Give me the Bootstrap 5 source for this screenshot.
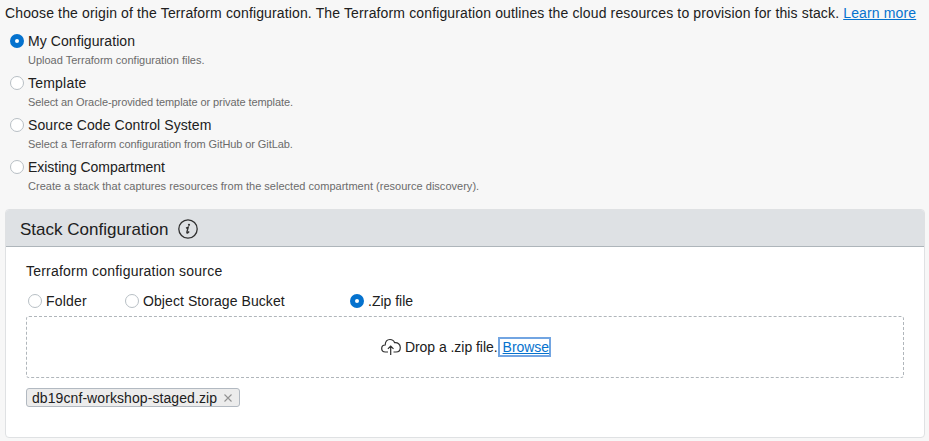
<!DOCTYPE html>
<html lang="en">
<head>
<meta charset="utf-8">
<title>Stack Configuration</title>
<link href="https://cdn.jsdelivr.net/npm/bootstrap@5.3.0/dist/css/bootstrap.min.css" rel="stylesheet">
<style>
body{background:#f7f7f7;color:#202020;font:14px/20px "Liberation Sans",Arial,sans-serif;height:441px;overflow:hidden;padding:3px 4px 0 5px}
a{color:#0572ce}
.intro{height:28px;white-space:nowrap;letter-spacing:.138px}
.source-option{height:42px;padding-left:5px}
.form-check-input.dot-radio{width:14px;height:14px;margin:0;border:1px solid #b8bfc5;background-color:#fff;flex:none;box-shadow:none}
.form-check-input.dot-radio:checked{border:5px solid #0572ce;background:#fff}
.radio-label{gap:4px}
.ls-snug{letter-spacing:-.04px}
.ls-soft{letter-spacing:.08px}
.ls-wide{letter-spacing:.22px}
.hint{font-size:11px;line-height:18px;color:#6b6b6b;padding-left:18px}
.hint-snug{letter-spacing:-.085px}
.hint-soft{letter-spacing:.02px}
.stack-panel{height:229px;border:1px solid #dfe1e3;border-radius:4px;background:#fff;color:inherit;margin-top:10px}
.stack-head{height:37px;background:#dee1e4;border-bottom:1px solid #aeb5ba;padding:3px 14px 0;gap:9px;border-radius:3px 3px 0 0}
.stack-head svg{margin-top:-2px}
.stack-title{font-size:17px;line-height:20px;font-weight:400}
.stack-body{padding:14px 20px 0}
.kinds{padding:10px 0 0 2px}
.kind-folder{width:97px}
.kind-bucket{width:225px}
.drop-zone{height:62px;margin-top:5px;border:1px dashed #b0b6bb;border-radius:3px;padding-left:2px}
.drop-text{letter-spacing:-.04px}
.browse-link{border:2px solid #72a5e2;line-height:16px;padding:0 0 0 3px;letter-spacing:-.03px}
.file-chip{height:19px;margin-top:10px;border:1px solid #b2b9c1;border-radius:3px;background:#ececec;padding:0 7px 0 5px;gap:7px}
</style>
<script src="https://cdn.jsdelivr.net/npm/bootstrap@5.3.0/dist/js/bootstrap.bundle.min.js"></script>
</head>
<body>
<div class="intro">Choose the origin of the Terraform configuration. The Terraform configuration outlines the cloud resources to provision for this stack. <a href="#">Learn more</a></div>
<div class="source-option"><label class="radio-label ls-soft d-flex align-items-center"><input class="form-check-input dot-radio" type="radio" name="origin" checked>My Configuration</label><div class="hint">Upload Terraform configuration files.</div></div>
<div class="source-option"><label class="radio-label ls-wide d-flex align-items-center"><input class="form-check-input dot-radio" type="radio" name="origin">Template</label><div class="hint hint-snug">Select an Oracle-provided template or private template.</div></div>
<div class="source-option"><label class="radio-label ls-soft d-flex align-items-center"><input class="form-check-input dot-radio" type="radio" name="origin">Source Code Control System</label><div class="hint hint-snug">Select a Terraform configuration from GitHub or GitLab.</div></div>
<div class="source-option"><label class="radio-label ls-snug d-flex align-items-center"><input class="form-check-input dot-radio" type="radio" name="origin">Existing Compartment</label><div class="hint hint-soft">Create a stack that captures resources from the selected compartment (resource discovery).</div></div>
<section class="card stack-panel">
  <div class="stack-head d-flex align-items-center">
    <h2 class="stack-title mb-0">Stack Configuration</h2>
    <svg width="22" height="22" viewBox="0 0 22 22" fill="none" stroke="#303030" aria-label="Information"><circle cx="11" cy="11" r="9.2" stroke-width="1.3"/><circle cx="12" cy="6.800" r="1.100" fill="#303030" stroke="none"/><path d="M9 10.200l2.200-.9-1.300 4.800q-.2 1.200.8.700l1.500-1.300" stroke-width="1.4"/></svg>
  </div>
  <div class="stack-body">
    <div class="ls-wide">Terraform configuration source</div>
    <div class="kinds d-flex">
      <label class="radio-label kind-folder ls-wide d-flex align-items-center"><input class="form-check-input dot-radio" type="radio" name="kind">Folder</label>
      <label class="radio-label kind-bucket ls-soft d-flex align-items-center"><input class="form-check-input dot-radio" type="radio" name="kind">Object Storage Bucket</label>
      <label class="radio-label d-flex align-items-center"><input class="form-check-input dot-radio" type="radio" name="kind" checked>.Zip file</label>
    </div>
    <div class="drop-zone d-flex align-items-center justify-content-center">
      <svg class="me-1" width="20" height="18" viewBox="0 0 20 18" fill="none" stroke="#303030" stroke-width="1.2"><path d="M7 14H4.300C2.200 14 .7 12.600.7 10.500.7 8.500 2.200 7 4.200 7 4.300 3.800 6.200 1.500 9 1.500c2.300 0 3.900 1.200 4.600 3.200 3.200-.4 5.700 1.500 5.700 4.700C19.300 12.200 17.500 14 15 14h-2.500M9.700 17V8M6.900 10.800 9.700 8l2.800 2.800"/></svg>
      <span class="drop-text">Drop a .zip file.</span><a class="browse-link" href="#">Browse</a>
    </div>
    <div class="file-chip d-inline-flex align-items-center"><span class="ls-soft">db19cnf-workshop-staged.zip</span><svg width="8" height="8" viewBox="0 0 8 8" stroke="#929292" stroke-width="1.1"><path d="M.5.5l7 7M7.500.500l-7 7"/></svg></div>
  </div>
</section>
</body>
</html>
